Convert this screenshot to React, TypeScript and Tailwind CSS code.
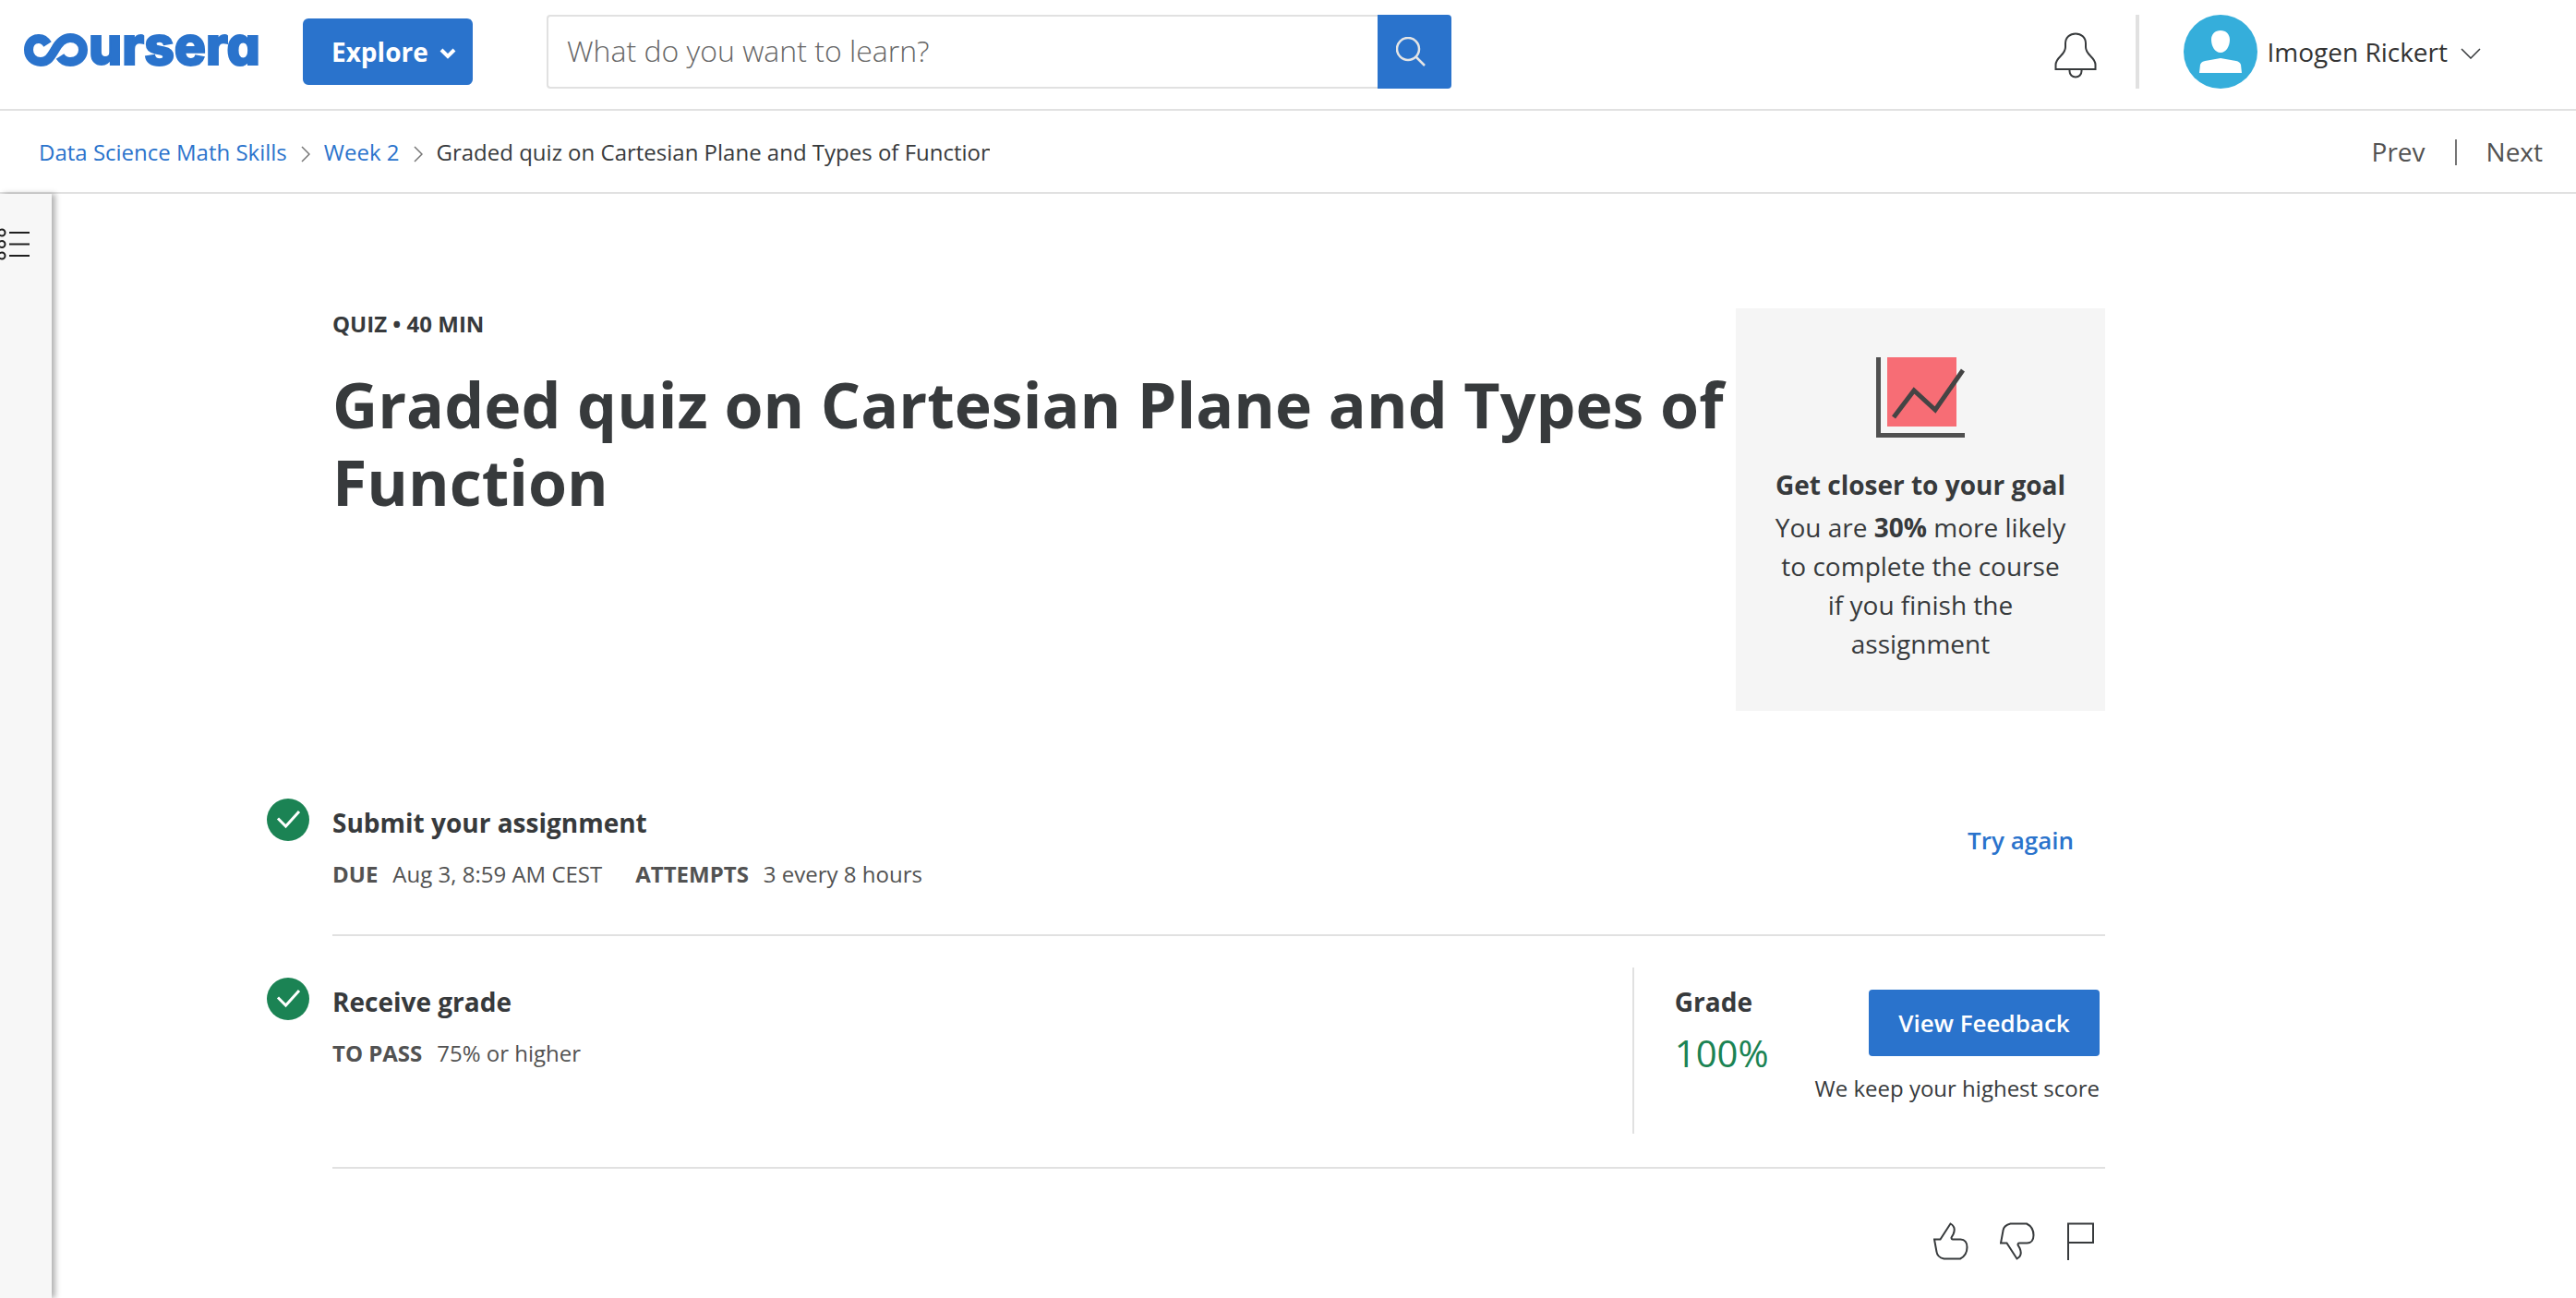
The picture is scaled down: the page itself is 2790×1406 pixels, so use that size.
import React from "react";

function Logo() {
  return (
    <a href="#home" aria-label="Coursera" className="flex h-10 w-64 shrink-0 items-center text-[#2a73cc]">
      <svg viewBox="0 0 256 40" className="h-10 w-64 overflow-visible" role="img" aria-hidden="true">
        <path
          d="M25.500 12 C23 8 19 5.500 15 6 C9 6.500 5 11.500 5 18 C5 25.500 10.500 31 18 31 C26 31 29 25.500 33.500 18 C37.500 10.500 42 5 50 5 C58 5 64 10.500 64 18 C64 25.500 58 31 50 31 C45 31 41.500 29 39 25"
          fill="none"
          stroke="currentColor"
          strokeWidth="10"
        />
        <text
          x="70"
          y="34"
          fill="currentColor"
          stroke="currentColor"
          strokeWidth="2"
          className="font-['Inter',sans-serif] text-[57px] font-extrabold [font-feature-settings:'cv11']"
        >
          ursera
        </text>
      </svg>
    </a>
  );
}

function SearchBar() {
  return (
    <form className="flex h-20 w-[980px] min-w-0" role="search" onSubmit={(e) => e.preventDefault()}>
      <input
        type="text"
        aria-label="What do you want to learn?"
        placeholder="What do you want to learn?"
        className="h-20 min-w-0 flex-1 rounded-l border-2 border-r-0 border-[#e1e1e1] px-5 pb-1 text-[32px] font-light text-[#525252] outline-none placeholder:text-[#666]"
      />
      <button type="submit" aria-label="Search" className="flex w-20 shrink-0 items-center justify-center rounded-r bg-[#2a73cc]">
        <svg viewBox="0 0 32 32" className="mr-2 size-8" fill="none" stroke="#e5e5e5" strokeWidth="2.5">
          <circle cx="13" cy="13" r="12" />
          <path d="M21.500 21.500 L31 31" />
        </svg>
      </button>
    </form>
  );
}

function Header() {
  return (
    <header className="flex h-[120px] items-start border-b-2 border-[#e1e1e1] pl-[26px] pr-[103px] pt-4">
      <div className="flex h-20 items-center">
        <Logo />
      </div>
      <button
        type="button"
        className="ml-[46px] mt-1 flex h-[72px] w-[184px] shrink-0 items-center gap-3 rounded-md bg-[#2a73cc] pl-[31px] text-[28px] font-bold text-white"
      >
        Explore
        <svg viewBox="0 0 18 12" className="mt-1 h-3 w-[18px]" fill="none" stroke="currentColor" strokeWidth="4">
          <path d="M2 2 L9 9 L16 2" />
        </svg>
      </button>
      <div className="ml-20 flex min-w-0">
        <SearchBar />
      </div>
      <div className="ml-auto flex h-20 shrink-0 items-center">
        <button type="button" aria-label="Notifications" className="mr-[42px] mt-2">
          <svg viewBox="0 0 46 50" className="h-[50px] w-[46px]" fill="none" stroke="#373a3c" strokeWidth="2">
            <path d="M1.500 40 V35 C1.500 31 4 28.500 7 25.500 C10.500 22 12 19.500 12 16 V12 C12 5.500 17 1.500 23 1.500 C29 1.500 34 5.500 34 12 V16 C34 19.500 35.500 22 39 25.500 C42 28.500 44.500 31 44.500 35 V40 Z" />
            <path d="M16.500 40 V42 C16.500 46 19.500 48.500 23 48.500 C26.500 48.500 29.500 46 29.500 42 V40" />
          </svg>
        </button>
        <div className="h-20 w-1 bg-[#e1e1e1]" />
        <button type="button" className="ml-12 flex items-center text-[28px] text-[#333]">
          <svg viewBox="0 0 80 80" className="mr-2.5 size-20" aria-hidden="true">
            <circle cx="40" cy="40" r="40" fill="#35aedb" />
            <path
              fill="#fff"
              d="M40 17 C46 17 50 21 50 27 C50 34 46 41 40 41 C34 41 30 34 30 27 C30 21 34 17 40 17 Z M17 63 L18 54 C19 51 22 50 26 49.500 L40 47 L54 49.500 C58 50 61 51 62 54 L63 63 Z"
            />
          </svg>
          Imogen Rickert
          <svg viewBox="0 0 22 12" className="ml-3.5 mt-1 h-3 w-[22px]" fill="none" stroke="#373a3c" strokeWidth="1.500">
            <path d="M1 1 L11 11 L21 1" />
          </svg>
        </button>
      </div>
    </header>
  );
}

function Crumb() {
  return (
    <svg viewBox="0 0 10 18" className="mx-[15px] mt-1 h-[18px] w-2.5 shrink-0" fill="none" stroke="#757575" strokeWidth="1.500" aria-hidden="true">
      <path d="M1 1 L9 9 L1 17" />
    </svg>
  );
}

function Breadcrumbs() {
  return (
    <nav className="flex h-[90px] items-center border-b-2 border-[#e1e1e1] pl-[42px] pr-9 pt-0.5 text-2xl">
      <a href="#course" className="text-[#2a73cc]">Data Science Math Skills</a>
      <Crumb />
      <a href="#week" className="text-[#2a73cc]">Week 2</a>
      <Crumb />
      <span className="w-[599px] overflow-hidden whitespace-nowrap text-[#373a3c]">
        Graded quiz on Cartesian Plane and Types of Function
      </span>
      <div className="ml-auto flex items-center text-[28px] text-[#525252]">
        <a href="#prev">Prev</a>
        <span className="mx-8 h-7 w-0.5 bg-[#757575]" />
        <a href="#next">Next</a>
      </div>
    </nav>
  );
}

function GoalCard() {
  return (
    <aside className="w-[400px] shrink-0 bg-[#f5f5f5] px-10 pb-[52px] pt-[52px] text-center text-[28px] leading-[42px] text-[#373a3c]">
      <svg viewBox="0 0 96 88" className="mx-auto h-[88px] w-24" fill="none" aria-hidden="true">
        <rect x="12" y="1" width="75" height="75" fill="#f76d75" />
        <path d="M2.500 1 V85.500 H96" stroke="#505050" strokeWidth="5" />
        <path d="M19 66 L41 37 L64 58 L94 15" stroke="#444" strokeWidth="5" />
      </svg>
      <h2 className="mt-[30px] whitespace-nowrap font-bold">Get closer to your goal</h2>
      <p className="mt-1">
        You are <b>30%</b> more likely to complete the course if you finish the assignment
      </p>
    </aside>
  );
}

function Done() {
  return (
    <svg viewBox="0 0 46 46" className="-ml-[71px] mr-[25px] size-[46px] shrink-0" role="img" aria-label="Completed">
      <circle cx="23" cy="23" r="23" fill="#1b8354" />
      <path d="M12 21.500 L20.500 30 L35 14" fill="none" stroke="#fff" strokeWidth="3" />
    </svg>
  );
}

function Fact({ label, value }: { label: string; value: string }) {
  return (
    <div className="flex gap-4">
      <dt className="font-bold">{label}</dt>
      <dd>{value}</dd>
    </div>
  );
}

function Step({ title, facts }: { title: string; facts: [string, string][] }) {
  return (
    <div className="flex">
      <Done />
      <div className="pt-[3px]">
        <h2 className="text-[28px] font-bold leading-[46px] text-[#373a3c]">{title}</h2>
        <dl className="mt-3 flex gap-9 text-2xl leading-[42px] text-[#525252]">
          {facts.map(([label, value]) => (
            <Fact key={label} label={label} value={value} />
          ))}
        </dl>
      </div>
    </div>
  );
}

const THUMB =
  "M1 18.500 H7.500 L18.500 1.500 C23 4 23.500 8.500 21.500 13 L19.500 16.500 C19.500 18 20 18.500 21 18.500 H29.500 C34 18.500 36.500 22 36.500 27 C36.500 32 34 37 29 39.500 H11.500 C7 38.500 4 36 3.500 32 Z";

function Feedback() {
  return (
    <div className="flex justify-end gap-[34px] pr-3 pt-[58px]">
      <button type="button" aria-label="Like">
        <svg viewBox="0 0 38 41" className="h-[41px] w-[38px]" fill="none" stroke="#373a3c" strokeWidth="2">
          <path d={THUMB} />
        </svg>
      </button>
      <button type="button" aria-label="Dislike">
        <svg viewBox="0 0 38 41" className="h-[41px] w-[38px]" fill="none" stroke="#373a3c" strokeWidth="2">
          <path d={THUMB} transform="matrix(1 0 0 -1 0 41)" />
        </svg>
      </button>
      <button type="button" aria-label="Report a problem">
        <svg viewBox="0 0 30 41" className="h-[41px] w-[30px]" fill="none" stroke="#373a3c" strokeWidth="2">
          <path d="M2 41 V1.500 H29 V22 H2" />
        </svg>
      </button>
    </div>
  );
}

export default function App() {
  return (
    <div className="flex min-h-screen flex-col bg-white font-['Open_Sans',sans-serif]">
      <Header />
      <Breadcrumbs />
      <div className="flex flex-1">
        <div className="w-14 shrink-0 bg-[#f7f7f7] pt-9 shadow-[4px_0_6px_rgba(0,0,0,0.3)]">
          <button type="button" aria-label="Open course outline" className="block">
            <svg viewBox="0 0 32 36" className="h-9 w-8" fill="none" stroke="#1f1f1f" strokeWidth="2">
              <circle cx="2" cy="6" r="3.500" />
              <circle cx="2" cy="18.500" r="3.500" />
              <circle cx="2" cy="31" r="3.500" />
              <path d="M10 6 H32 M10 18.500 H32 M10 31 H32" />
            </svg>
          </button>
        </div>
        <main className="min-w-0 flex-1 pl-[304px] pr-[510px] pt-[124px]">
          <div className="flex items-start">
            <div className="min-w-0 flex-1 text-[#373a3c]">
              <p className="text-2xl font-bold leading-[34px]">QUIZ • 40 MIN</p>
              <h1 className="mt-7 text-[68px] font-bold leading-[84px]">
                Graded quiz on Cartesian Plane and Types of Function
              </h1>
            </div>
            <GoalCard />
          </div>

          <section className="mt-[95px] flex h-[149px] justify-between border-b-2 border-[#e1e1e1]">
            <Step title="Submit your assignment" facts={[["DUE", "Aug 3, 8:59 AM CEST"], ["ATTEMPTS", "3 every 8 hours"]]} />
            <a href="#retry" className="mr-[34px] mt-[26px] text-[26px] font-semibold text-[#2a73cc]">Try again</a>
          </section>

          <section className="flex justify-between border-b-2 border-[#e1e1e1] pb-9 pt-[34px]">
            <div className="pt-[11px]">
              <Step title="Receive grade" facts={[["TO PASS", "75% or higher"]]} />
            </div>
            <div className="flex h-[180px] border-l-2 border-[#e1e1e1] pl-11 pr-1.5 text-[#373a3c]">
              <div className="pt-3.5">
                <h3 className="text-[28px] font-bold leading-[46px]">Grade</h3>
                <p className="mt-1.5 text-[40px] leading-[54px] text-[#1b8354]">100%</p>
              </div>
              <div className="ml-[50px] flex flex-col items-end pt-6">
                <button type="button" className="h-[72px] w-[250px] rounded bg-[#2a73cc] text-[26px] font-semibold text-white">
                  View Feedback
                </button>
                <p className="mt-[17px] text-2xl leading-9">We keep your highest score</p>
              </div>
            </div>
          </section>
          <Feedback />
        </main>
      </div>
    </div>
  );
}
